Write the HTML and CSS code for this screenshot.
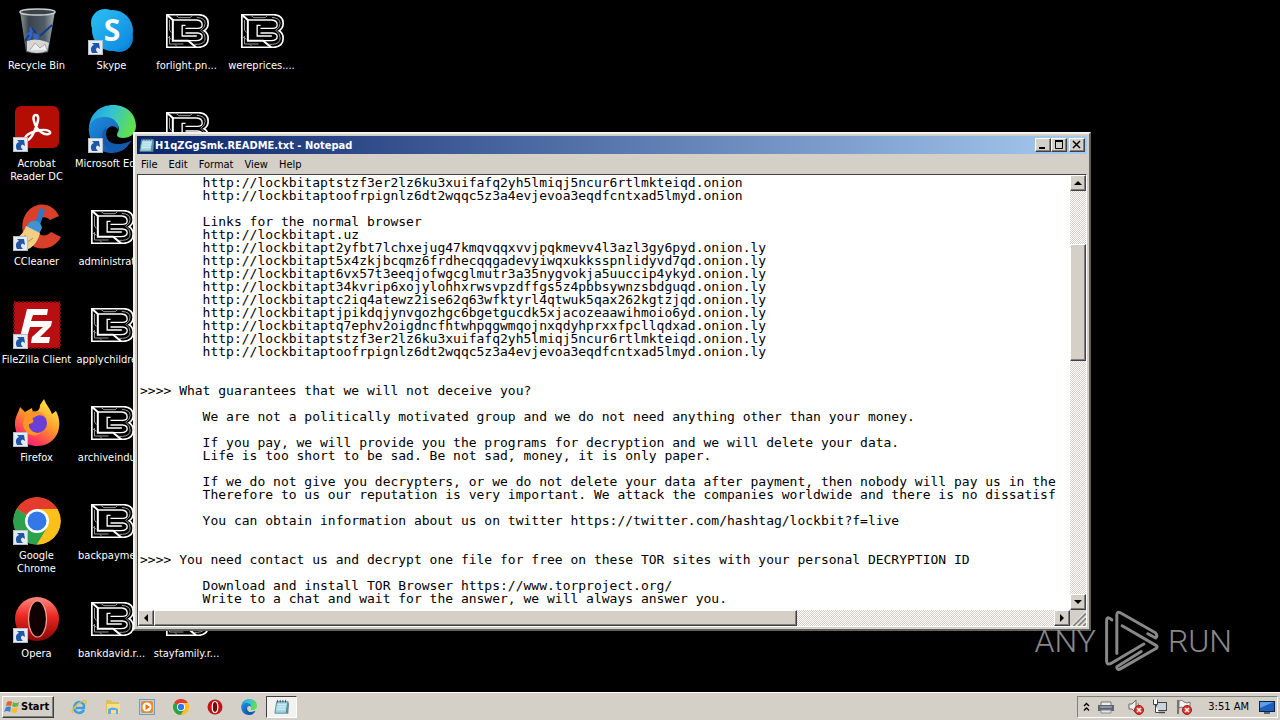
FILE: index.html
```html
<!DOCTYPE html>
<html lang="en">
<head>
<meta charset="utf-8">
<title>Desktop</title>
<link rel="stylesheet" href="styles.css">
</head>
<body>
<svg class="defs" aria-hidden="true">
  <defs>
    <linearGradient id="edgeA" x1="0" y1="0" x2="1" y2="0.3"><stop offset="0" stop-color="#1b9de2"/><stop offset="0.5" stop-color="#35c1d6"/><stop offset="1" stop-color="#5fe04f"/></linearGradient>
    <linearGradient id="edgeB" x1="0" y1="0" x2="1" y2="1"><stop offset="0" stop-color="#1e8fe0"/><stop offset="1" stop-color="#0f4aa0"/></linearGradient>
    <linearGradient id="ffA" x1="0.8" y1="0" x2="0.2" y2="1"><stop offset="0" stop-color="#fff04a"/><stop offset="0.45" stop-color="#ff9a2a"/><stop offset="0.8" stop-color="#ff3a5a"/><stop offset="1" stop-color="#e0208a"/></linearGradient>
    <linearGradient id="opA" x1="0" y1="0" x2="0" y2="1"><stop offset="0" stop-color="#ff8a80"/><stop offset="0.45" stop-color="#e8261f"/><stop offset="1" stop-color="#8a0505"/></linearGradient>
    <linearGradient id="binA" x1="0" y1="0" x2="1" y2="0"><stop offset="0" stop-color="#8f979c"/><stop offset="0.25" stop-color="#3a434b"/><stop offset="0.7" stop-color="#4f5b66"/><stop offset="1" stop-color="#a9b0b4"/></linearGradient>
    <linearGradient id="skA" x1="0" y1="0" x2="1" y2="1"><stop offset="0" stop-color="#2cc0f5"/><stop offset="1" stop-color="#0a84dd"/></linearGradient>
    <symbol id="arrow" viewBox="0 0 15 15"><rect x="0.5" y="0.5" width="14" height="14" fill="#e6ebf2" stroke="#b9bec6"/><path d="M4 13C2 9 3 6 6 5L4 3L11 3L12 9L9.500 7.500C7 9 8 11 10 13Z" fill="#1f56a8"/></symbol>
    <symbol id="lock" viewBox="0 0 128 102"><g fill="none" stroke="#fff"><path d="M2 2H98Q126 4 126 28Q126 43 114 50Q126 57 126 73Q126 98 98 100H2Z" stroke-width="5"/><path d="M2 2L20 18V80H66L90 100" stroke-width="6"/><path d="M20 18H92Q108 19 108 33Q108 43 94 43H58" stroke-width="4"/><path d="M58 34H48V66H92M66 80H90Q108 79 108 68Q108 58 94 57H58" stroke-width="4"/><path d="M10 18V48L16 56M10 66V90H52M28 3L38 11H72L80 3M92 10Q117 12 117 28Q117 40 104 49Q117 58 117 72Q117 90 94 91H84M4 68L16 76M26 91L34 99" stroke="#999" stroke-width="3"/></g></symbol>
    <symbol id="chrome" viewBox="0 0 48 48"><circle cx="24" cy="24" r="23.500" fill="#fbc11a"/><path d="M24 24L3.500 12A23.500 23.500 0 0 1 44.500 12Z" fill="#e33b2e"/><path d="M24 24L3.500 12A23.500 23.500 0 0 0 24 47.500L34.500 30Z" fill="#2da14b"/><path d="M24 12H44.500A23.500 23.500 0 0 1 24 47.500L34.500 30Z" fill="#fbc11a"/><circle cx="24" cy="24" r="12" fill="#fff"/><circle cx="24" cy="24" r="9.500" fill="#3378e8"/></symbol>
    <symbol id="opera" viewBox="0 0 48 48"><circle cx="24" cy="23" r="22" fill="url(#opA)"/><ellipse cx="24.500" cy="23" rx="9" ry="18" fill="#100" stroke="#f0a09a" stroke-width="1.200"/></symbol>
    <symbol id="operasmall" viewBox="0 0 16 16"><circle cx="8" cy="8" r="7.500" fill="#c4141a"/><ellipse cx="8" cy="8" rx="2.800" ry="5.500" fill="#7c0508" stroke="#fff" stroke-width="1.200"/></symbol>
    <symbol id="edge" viewBox="0 0 48 48"><path d="M1 27C0 8 13 0 25 0C40 0 48 10 48 21C48 29 42 33 35 33C29 33 28 30 30 27C33 22 28 15 20 15C10 15 3 20 1 27Z" fill="url(#edgeA)"/><path d="M1 27C0 16 9 12 17 12C27 12 32 20 30 25C28 19 18 20 18 29C18 38 28 43 43 36C38 45 30 48 24 48C11 48 2 39 1 27Z" fill="url(#edgeB)"/><path d="M18 29C18 38 28 43 43 36C38 45 32 47 27 47C15 45 10 31 18 22Z" fill="#125aae"/></symbol>
    <symbol id="note" viewBox="0 0 18 18"><path d="M3 3H16L14 16H1Z" fill="#9ed3e0" stroke="#5b8795"/><path d="M4 6H14M4 8H14M3 10H13M3 12H13" stroke="#d9f3f8"/><path d="M4 1V4M7 1V4M10 1V4M13 1V4" stroke="#35525a"/><path d="M15 4L13 16L16 17L17 5Z" fill="#5f8e9a"/></symbol>
    <symbol id="bad" viewBox="0 0 10 10"><circle cx="5" cy="5" r="4.500" fill="#e0352b" stroke="#a01814"/><path d="M3 3L7 7M7 3L3 7" stroke="#fff" stroke-width="1.500"/></symbol>
  </defs>
</svg>

<main class="desktop">
  <div class="icons">
    <div class="item"><svg class="pic" viewBox="0 0 48 48"><path d="M7 3H42L35 44Q24 47 13 44Z" fill="url(#binA)"/><path d="M14 33Q24 29 36 35L34 43Q24 47 14 43Z" fill="#d5d5d5"/><path d="M17 42L22 35L27 40L32 36L34 42" fill="#eee" stroke="#aaa"/><path d="M13 27L17 23L20 26L17 32L13 31ZM21 25L26 27L25 32L20 30ZM17 19L21 21L19 25L16 22Z" fill="#2c66cc"/><path d="M19 20L23 25M27 28L39 17M16 27L12 33" stroke="#123c86" stroke-width="2"/><ellipse cx="24.500" cy="4" rx="17.500" ry="3" fill="#3c4248" stroke="#c9cdd0" stroke-width="1.500"/></svg><span>Recycle Bin</span></div>
    <div class="item"><svg class="pic" viewBox="0 0 48 48"><rect x="2" y="0" width="44" height="42" rx="6" fill="#b40d04"/><path d="M23 9C18 8 21 21 28 26C33 30 40 28 36 25C30 22 14 26 12 32C11 37 17 35 21 26C25 18 27 9 23 9Z" fill="none" stroke="#fff" stroke-width="2.500"/><use href="#arrow" x="0" y="31" width="15" height="15"/></svg><span>Acrobat<br>Reader DC</span></div>
    <div class="item"><svg class="pic" viewBox="0 0 48 48"><path d="M46 12L37 16C31 10 22 15 23 23C24 32 33 34 38 28L48 33C41 46 25 48 16 39C5 28 8 8 22 2C32-2 42 3 46 12Z" fill="#d8402c"/><path d="M27 4L32 6L27 21L22 19Z" fill="#2c78c4"/><path d="M15 20C19 14 28 17 29 24L26 30L13 23Z" fill="#3f92d6"/><path d="M13 22L27 29C25 38 19 45 12 46L1 35C7 33 11 28 13 22Z" fill="#f3cf85"/><path d="M8 34L13 31M13 39L20 34" stroke="#c18a3c"/><use href="#arrow" x="0" y="32" width="15" height="15"/></svg><span>CCleaner</span></div>
    <div class="item"><svg class="pic" viewBox="0 0 48 48"><rect x="1" y="0" width="46" height="46" fill="#b80f12" stroke="#7b0709" stroke-width="2" stroke-dasharray="2 2"/><path d="M14 7H35L34 13H20L18 19H30L28 25H17L13 39H6ZM24 19H39L38 24L27 35H37L36 41H18L19 35L30 25H23Z" fill="#fff"/><use href="#arrow" x="0" y="32" width="15" height="15"/></svg><span>FileZilla Client</span></div>
    <div class="item"><svg class="pic" viewBox="0 0 48 48"><path d="M2 24C2 16 5 14 7 7L12 12L19 8L20 13C24 12 27 10 27 5L31-1C33 5 37 8 39 14L43 11C47 18 47 26 45 32C41 42 33 46 24 46C12 46 2 37 2 24Z" fill="url(#ffA)"/><circle cx="24" cy="23" r="10" fill="#6b3fd6"/><path d="M13 13C18 10 30 10 33 18C27 13 23 16 19 19C22 20 20 24 16 24C15 30 22 34 28 33C20 39 10 33 10 23Z" fill="#ff9526"/><use href="#arrow" x="0" y="32" width="15" height="15"/></svg><span>Firefox</span></div>
    <div class="item"><svg class="pic" viewBox="0 0 48 48"><use href="#chrome" y="-1" width="48" height="48"/><use href="#arrow" x="0" y="32" width="15" height="15"/></svg><span>Google<br>Chrome</span></div>
    <div class="item"><svg class="pic" viewBox="0 0 48 48"><use href="#opera" width="48" height="48"/><use href="#arrow" x="0" y="32" width="15" height="15"/></svg><span>Opera</span></div>

    <div class="item"><svg class="pic" viewBox="0 0 48 48"><circle cx="17" cy="15" r="14" fill="#27b5f0"/><circle cx="31" cy="30" r="14" fill="#0f85da"/><circle cx="24.500" cy="22.500" r="20.500" fill="url(#skA)"/><text class="skype" x="24" y="33" text-anchor="middle">S</text><use href="#arrow" x="0" y="32" width="15" height="15"/></svg><span>Skype</span></div>
    <div class="item"><svg class="pic" viewBox="0 0 48 48"><use href="#edge" y="-1" width="48" height="48"/><use href="#arrow" x="0" y="32" width="15" height="15"/></svg><span>Microsoft Edge</span></div>
    <div class="item"><svg class="pic"><use href="#lock" x="3" y="6" width="43" height="34"/></svg><span>administrat...</span></div>
    <div class="item"><svg class="pic"><use href="#lock" x="3" y="6" width="43" height="34"/></svg><span>applychildre...</span></div>
    <div class="item"><svg class="pic"><use href="#lock" x="3" y="6" width="43" height="34"/></svg><span>archiveindu...</span></div>
    <div class="item"><svg class="pic"><use href="#lock" x="3" y="6" width="43" height="34"/></svg><span>backpayme...</span></div>
    <div class="item"><svg class="pic"><use href="#lock" x="3" y="6" width="43" height="34"/></svg><span>bankdavid.r...</span></div>

    <div class="item"><svg class="pic"><use href="#lock" x="3" y="6" width="43" height="34"/></svg><span>forlight.pn...</span></div>
    <div class="item"><svg class="pic"><use href="#lock" x="3" y="6" width="43" height="34"/></svg></div>
    <div class="item last"><svg class="pic"><use href="#lock" x="3" y="6" width="43" height="34"/></svg><span>stayfamily.r...</span></div>
    <div class="item"><svg class="pic"><use href="#lock" x="3" y="6" width="43" height="34"/></svg><span>wereprices....</span></div>
  </div>

  <section class="window">
    <header class="titlebar">
      <svg class="small" viewBox="0 0 18 18"><use href="#note" width="18" height="18"/></svg>
      <h1>H1qZGgSmk.README.txt - Notepad</h1>
      <button class="raised cap" aria-label="Minimize"><svg viewBox="0 0 12 10"><path d="M2 8H8" stroke="#000" stroke-width="2"/></svg></button>
      <button class="raised cap" aria-label="Maximize"><svg viewBox="0 0 12 10"><path d="M2.500 1V8.500H9.500V1" fill="none" stroke="#000"/><path d="M2 1H10" stroke="#000" stroke-width="2"/></svg></button>
      <button class="raised cap close" aria-label="Close"><svg viewBox="0 0 12 10"><path d="M2 1L9 8M9 1L2 8" stroke="#000" stroke-width="1.500"/></svg></button>
    </header>
    <nav class="menu"><button>File</button><button>Edit</button><button>Format</button><button>View</button><button>Help</button></nav>
    <div class="editor">
      <textarea class="note" wrap="off" readonly spellcheck="false" aria-label="Text">
        http://lockbitaptstzf3er2lz6ku3xuifafq2yh5lmiqj5ncur6rtlmkteiqd.onion
        http://lockbitaptoofrpignlz6dt2wqqc5z3a4evjevoa3eqdfcntxad5lmyd.onion

        Links for the normal browser
        http://lockbitapt.uz
        http://lockbitapt2yfbt7lchxejug47kmqvqqxvvjpqkmevv4l3azl3gy6pyd.onion.ly
        http://lockbitapt5x4zkjbcqmz6frdhecqqgadevyiwqxukksspnlidyvd7qd.onion.ly
        http://lockbitapt6vx57t3eeqjofwgcglmutr3a35nygvokja5uuccip4ykyd.onion.ly
        http://lockbitapt34kvrip6xojylohhxrwsvpzdffgs5z4pbbsywnzsbdguqd.onion.ly
        http://lockbitaptc2iq4atewz2ise62q63wfktyrl4qtwuk5qax262kgtzjqd.onion.ly
        http://lockbitaptjpikdqjynvgozhgc6bgetgucdk5xjacozeaawihmoio6yd.onion.ly
        http://lockbitaptq7ephv2oigdncfhtwhpqgwmqojnxqdyhprxxfpcllqdxad.onion.ly
        http://lockbitaptstzf3er2lz6ku3xuifafq2yh5lmiqj5ncur6rtlmkteiqd.onion.ly
        http://lockbitaptoofrpignlz6dt2wqqc5z3a4evjevoa3eqdfcntxad5lmyd.onion.ly


&gt;&gt;&gt;&gt; What guarantees that we will not deceive you?

        We are not a politically motivated group and we do not need anything other than your money.

        If you pay, we will provide you the programs for decryption and we will delete your data.
        Life is too short to be sad. Be not sad, money, it is only paper.

        If we do not give you decrypters, or we do not delete your data after payment, then nobody will pay us in the
        Therefore to us our reputation is very important. We attack the companies worldwide and there is no dissatisf

        You can obtain information about us on twitter https://twitter.com/hashtag/lockbit?f=live


&gt;&gt;&gt;&gt; You need contact us and decrypt one file for free on these TOR sites with your personal DECRYPTION ID

        Download and install TOR Browser https://www.torproject.org/
        Write to a chat and wait for the answer, we will always answer you.</textarea>
      <div class="bar vertical">
        <button class="raised step" aria-label="Scroll up"><svg viewBox="0 0 8 8"><path d="M0 6L4 2L8 6Z"/></svg></button>
        <div class="track before-v"></div><div class="raised thumb-v"></div><div class="track"></div>
        <button class="raised step" aria-label="Scroll down"><svg viewBox="0 0 8 8"><path d="M0 2L4 6L8 2Z"/></svg></button>
      </div>
      <div class="bar horizontal">
        <button class="raised step" aria-label="Scroll left"><svg viewBox="0 0 8 8"><path d="M6 0L2 4L6 8Z"/></svg></button>
        <div class="raised thumb-h"></div><div class="track"></div>
        <button class="raised step" aria-label="Scroll right"><svg viewBox="0 0 8 8"><path d="M2 0L6 4L2 8Z"/></svg></button>
      </div>
      <svg class="grip" viewBox="0 0 16 16"><path d="M3 16L16 3M8 16L16 8M13 16L16 13" stroke="#808080" stroke-width="2"/><path d="M1.500 16L16 1.500M6.500 16L16 6.500M11.500 16L16 11.500" stroke="#fff"/></svg>
    </div>
  </section>

  <div class="watermark">
    <span>ANY</span>
    <svg viewBox="388 118 168 188"><g fill="none" stroke="#aaa" stroke-width="9" stroke-linejoin="round" stroke-linecap="round"><path d="M411 148Q396 134 395 150V274Q396 286 408 280L508 221"/><path d="M426 250V132Q427 121 438 127L543 187Q551 195 544 203L520 190"/><path d="M442 166L546 226Q550 230 546 234L434 298Q426 300 426 290L500 244"/></g></svg>
    <span>RUN</span>
  </div>
</main>

<footer class="taskbar">
  <button class="raised start"><svg viewBox="0 0 16 16"><path d="M3 3Q6 1 8 3L7 7Q4 6 2 7Z" fill="#e8602c"/><path d="M9 3Q12 5 15 3L14 7Q11 9 8 7Z" fill="#6db33f"/><path d="M2 8Q5 7 7 8L6 13Q3 11 0 13Z" fill="#3b82d6"/><path d="M8 9Q11 10 14 8L13 13Q10 15 7 13Z" fill="#f5c02c"/></svg>Start</button>
  <nav class="quick">
    <button aria-label="Internet Explorer"><svg viewBox="0 0 16 16"><path d="M13 11Q11 14 8 14Q3 13 3 8.500Q4 3 8.500 3Q14 4 13 9H5" fill="none" stroke="#3aa0e0" stroke-width="2.500"/><path d="M2 14Q-1 12 6 6Q13 0 15 2Q16 3 14 5" fill="none" stroke="#e8c040" stroke-width="1.300"/></svg></button>
    <button aria-label="Explorer"><svg viewBox="0 0 16 16"><path d="M1 1H6L7 3H14V14H1Z" fill="#dfc05c"/><path d="M2 5H15V14H2Z" fill="#f6e08c"/><path d="M3 15V10Q8 7 13 10V15H11V11H6V15Z" fill="#5aaede"/></svg></button>
    <button aria-label="Media Player"><svg viewBox="0 0 16 16"><rect x="0.5" y="0.5" width="15" height="15" fill="#b5d2ee" stroke="#6e9cc8"/><rect x="2" y="2" width="12" height="12" rx="2" fill="#f28a1c"/><circle cx="8" cy="8" r="4.500" fill="#fff"/><path d="M6.500 5V11L11 8Z" fill="#e8720c"/></svg></button>
    <button aria-label="Chrome"><svg viewBox="0 0 48 48"><use href="#chrome" width="48" height="48"/></svg></button>
    <button aria-label="Opera"><svg viewBox="0 0 16 16"><use href="#operasmall" width="16" height="16"/></svg></button>
    <button aria-label="Edge"><svg viewBox="0 0 48 48"><use href="#edge" width="48" height="48"/></svg></button>
    <button class="active" aria-label="Notepad"><svg viewBox="0 0 18 18"><use href="#note" width="18" height="18"/></svg></button>
  </nav>
  <div class="tray">
    <svg class="chev" viewBox="0 0 7 10"><path d="M1 4L3.500 1.500L6 4M1 8.500L3.500 6L6 8.500" fill="none" stroke="#000" stroke-width="1.300"/></svg>
    <svg viewBox="0 0 16 16"><path d="M3 3H13V7H3Z" fill="#eee" stroke="#777"/><path d="M0 6H16V12H0Z" fill="#5c6570"/><path d="M2 8H14" stroke="#bcc5cc"/><path d="M3 11H13V14H3Z" fill="#dbe9f5" stroke="#888"/></svg>
    <svg class="sound" viewBox="0 0 16 16"><path d="M1 5H4L8 1V14L4 10H1Z" fill="#eee" stroke="#666"/><path d="M10 4Q12 7 10 10" fill="none" stroke="#888"/><use href="#bad" x="6" y="6" width="10" height="10"/></svg>
    <svg viewBox="0 0 16 16"><rect x="4.500" y="3.500" width="10" height="8" fill="#c9d4dc" stroke="#444"/><path d="M7 13.500H13" stroke="#444" stroke-width="1.500"/><path d="M1.500 0.500V5.500H5.500V0.500M3.500 5.500V13.500H7" fill="#fff" stroke="#444"/></svg>
    <svg viewBox="0 0 16 16"><path d="M2 1V15" stroke="#555" stroke-width="1.500"/><path d="M3 2Q6 0 8 3Q11 5 14 3V9Q11 11 8 9Q6 7 3 9Z" fill="#f4f4f4" stroke="#777"/><use href="#bad" x="6" y="6" width="10" height="10"/></svg>
    <time>3:51 AM</time>
    <svg viewBox="0 0 16 16"><rect x="0.500" y="2.500" width="15" height="10" fill="#1d5fc0" stroke="#123"/><path d="M1 3H15L1 9Z" fill="#5a9fe8"/><path d="M5 14H11" stroke="#345" stroke-width="1.500"/></svg>
  </div>
</footer>
</body>
</html>
```
FILE: styles.css
```css
* { box-sizing: border-box; }

body {
  margin: 0;
  height: 100vh;
  display: flex;
  flex-direction: column;
  overflow: hidden;
  background: #000;
  color: #fff;
  font: 11px/13px "DejaVu Sans Condensed", "DejaVu Sans", sans-serif;
}

button {
  margin: 0;
  padding: 0;
  border: 0;
  background: none;
  color: #000;
  font: inherit;
}

svg { display: block; }
.defs { position: absolute; width: 0; height: 0; }

.raised {
  background: #d4d0c8;
  border: 1px solid;
  border-color: #fff #404040 #404040 #fff;
  box-shadow: inset -1px -1px #808080;
}

/* Desktop icons */
.desktop { position: relative; flex: 1; min-height: 0; }

.icons {
  display: grid;
  grid-auto-flow: column;
  grid-template-rows: repeat(7, 98px);
  grid-auto-columns: 75px;
  margin-left: -1px;
  padding-top: 8px;
}

.item { display: flex; flex-direction: column; align-items: center; gap: 3px; text-align: center; white-space: nowrap; }
.item.last { grid-row: 7; }
.pic { width: 48px; height: 48px; overflow: visible; }
.skype { font: bold 30px "Open Sans", sans-serif; fill: #fff; }

/* Notepad window */
.window {
  position: absolute;
  inset: 132px 189px 61px 133px;
  display: flex;
  flex-direction: column;
  padding: 2px;
  background: #d4d0c8;
  border: 2px solid;
  border-color: #f4f2ee #606060 #606060 #f4f2ee;
  color: #000;
}

.titlebar {
  display: flex;
  align-items: center;
  height: 18px;
  padding: 0 2px;
  background: linear-gradient(90deg, #0a246a, #a6caf0);
  color: #fff;
}

.titlebar h1 { flex: 1; margin: 0; font-size: 11px; font-weight: bold; }
.small { width: 16px; height: 16px; }
.cap { display: grid; place-items: center; width: 16px; height: 14px; }
.cap svg { width: 12px; height: 10px; }
.close { margin-left: 2px; }

.menu { display: flex; gap: 11px; height: 20px; padding-left: 4px; }

.editor {
  flex: 1;
  min-height: 0;
  display: grid;
  grid-template: minmax(0, 1fr) 16px / minmax(0, 1fr) 16px;
  border: 1px solid;
  border-color: #404040 #fff #fff #404040;
}

.note {
  display: block;
  width: 100%;
  height: 100%;
  margin: 0;
  padding: 1px 0 0 2px;
  border: 0;
  outline: 0;
  resize: none;
  overflow: hidden;
  background: #fff;
  color: #000;
  font: 13px/13px "DejaVu Sans Mono", monospace;
  white-space: pre;
}

.bar { display: flex; min-width: 0; min-height: 0; }
.vertical { flex-direction: column; }
.track { flex: 1; background: repeating-conic-gradient(#fff 0 25%, #d4d0c8 0 50%) 0 0 / 2px 2px; }
.before-v { flex: 0 0 53px; }
.thumb-v { flex: 0 0 27%; }
.thumb-h { flex: 0 0 69%; }
.step { flex: none; display: grid; place-items: center; width: 16px; height: 16px; }
.step svg { width: 8px; height: 8px; }
.grip { width: 16px; height: 16px; }

/* Watermark laid over the desktop and the window corner */
.watermark {
  position: absolute;
  right: 48px;
  bottom: 20px;
  display: flex;
  align-items: center;
  gap: 8px;
  color: #aaa;
  font: 300 32px/62px "Roboto", sans-serif;
  opacity: 0.8;
  pointer-events: none;
}

.watermark svg { width: 56px; height: 62px; }

/* Taskbar */
.taskbar {
  flex: none;
  display: flex;
  align-items: center;
  height: 28px;
  padding: 1px 2px;
  background: #d4d0c8;
  border-top: 1px solid #fff;
  color: #000;
}

.start {
  display: flex;
  align-items: center;
  gap: 1px;
  height: 22px;
  padding: 0 4px 0 1px;
  font-weight: bold;
}

.start svg { width: 16px; height: 16px; }
.quick { display: flex; flex: 1; padding-left: 8px; }
.quick button { display: grid; place-items: center; width: 34px; height: 22px; }
.quick svg { width: 16px; height: 16px; }

.quick .active {
  width: 31px;
  background: #f4f2ee;
  border: 1px solid;
  border-color: #404040 #fff #fff #404040;
}

.tray {
  display: flex;
  align-items: center;
  gap: 8px;
  height: 22px;
  padding: 0 2px 0 5px;
  border: 1px solid;
  border-color: #808080 #fff #fff #808080;
}

.tray svg { width: 16px; height: 16px; }
.tray .chev { width: 7px; height: 10px; }
.tray .sound { margin-left: 6px; }
.tray time { margin: 0 2px 0 8px; }
```
